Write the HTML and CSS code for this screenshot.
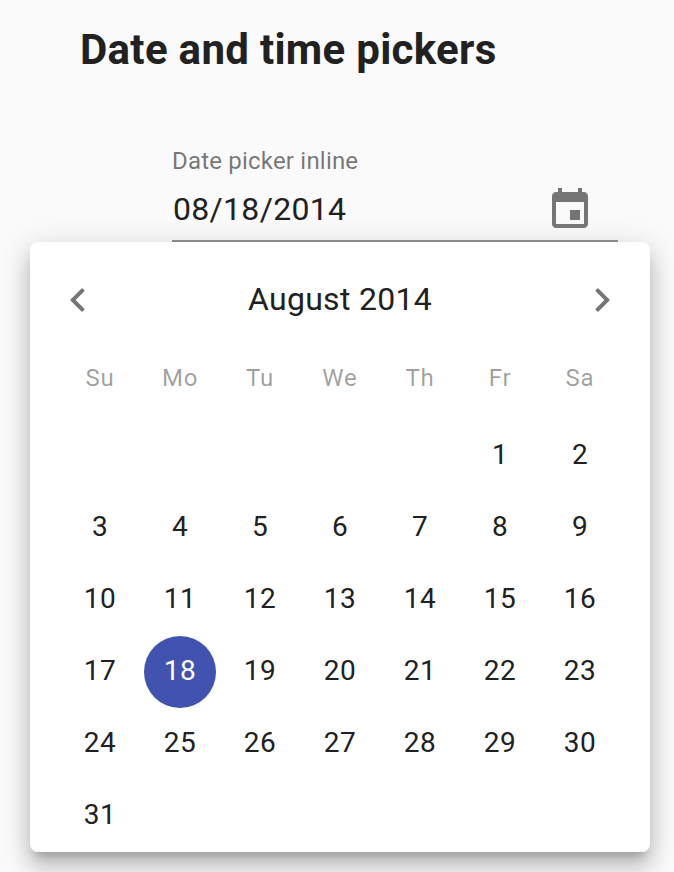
FILE: index.html
```html
<!DOCTYPE html>
<html lang="en">
<head>
<meta charset="utf-8">
<title>Date and time pickers</title>
<link rel="stylesheet" href="styles.css">
</head>
<body>
<h1 class="title">Date and time pickers</h1>
<div class="field">
  <div class="field-label">Date picker inline</div>
  <div class="field-row">
    <span class="field-value">08/18/2014</span>
    <svg class="field-icon" viewBox="0 0 24 24"><path d="M17 12h-5v5h5v-5zM16 1v2H8V1H6v2H5c-1.11 0-1.99.9-1.99 2L3 19c0 1.1.89 2 2 2h14c1.1 0 2-.9 2-2V5c0-1.1-.9-2-2-2h-1V1h-2zm3 18H5V8h14v11z"/></svg>
  </div>
</div>
<div class="picker">
  <div class="picker-header">
    <svg class="arrow" viewBox="0 0 24 24"><path d="M15.41 7.41L14 6l-6 6 6 6 1.41-1.41L10.83 12z"/></svg>
    <span class="month">August 2014</span>
    <svg class="arrow" viewBox="0 0 24 24"><path d="M10 6L8.59 7.41 13.17 12l-4.58 4.59L10 18l6-6z"/></svg>
  </div>
  <div class="weekdays">
    <span>Su</span><span>Mo</span><span>Tu</span><span>We</span><span>Th</span><span>Fr</span><span>Sa</span>
  </div>
  <div class="days">
    <span class="day first">1</span><span class="day">2</span>
    <span class="day">3</span><span class="day">4</span><span class="day">5</span><span class="day">6</span><span class="day">7</span><span class="day">8</span><span class="day">9</span>
    <span class="day">10</span><span class="day">11</span><span class="day">12</span><span class="day">13</span><span class="day">14</span><span class="day">15</span><span class="day">16</span>
    <span class="day">17</span><span class="day selected">18</span><span class="day">19</span><span class="day">20</span><span class="day">21</span><span class="day">22</span><span class="day">23</span>
    <span class="day">24</span><span class="day">25</span><span class="day">26</span><span class="day">27</span><span class="day">28</span><span class="day">29</span><span class="day">30</span>
    <span class="day">31</span>
  </div>
</div>
</body>
</html>
```

FILE: styles.css
```css
* { box-sizing: border-box; }
body {
  margin: 0;
  height: 872px;
  overflow: hidden;
  background: #fafafa;
  color: #212121;
  font-family: Roboto, "Liberation Sans", sans-serif;
}
.title {
  margin: 0;
  padding: 25px 0 0 80px;
  height: 146px;
  font-size: 42px;
  line-height: 50px;
  font-weight: 700;
  letter-spacing: 0.3px;
  white-space: nowrap;
}
.field {
  width: 446px;
  height: 96px;
  margin-left: 172px;
  border-bottom: 2px solid #949494;
}
.field-label {
  display: block;
  height: 30px;
  font-size: 24px;
  line-height: 30px;
  letter-spacing: 0.2px;
  color: rgba(0, 0, 0, 0.54);
}
.field-row {
  display: flex;
  justify-content: space-between;
  padding: 0 24px 0 1px;
}
.field-value {
  padding-top: 14px;
  font-size: 32px;
  line-height: 38px;
  letter-spacing: 0.3px;
}
.field-icon {
  width: 48px;
  height: 48px;
  margin-top: 10px;
  fill: #757575;
}
.picker {
  width: 620px;
  height: 610px;
  margin-left: 30px;
  border-radius: 8px;
  background: #fff;
  box-shadow: 0 10px 10px -6px rgba(0, 0, 0, 0.2), 0 16px 20px 2px rgba(0, 0, 0, 0.14), 0 6px 28px 4px rgba(0, 0, 0, 0.12);
}
.picker-header {
  display: flex;
  justify-content: space-between;
  align-items: center;
  height: 116px;
  padding: 0 24px;
}
.arrow {
  width: 48px;
  height: 48px;
  fill: #757575;
}
.month {
  padding-bottom: 2px;
  font-size: 32px;
  line-height: 40px;
  letter-spacing: 0.3px;
}
.weekdays, .days {
  display: grid;
  grid-template-columns: repeat(7, 80px);
  padding-left: 30px;
  text-align: center;
}
.weekdays {
  height: 62px;
  font-size: 24px;
  line-height: 40px;
  letter-spacing: 0.8px;
  color: rgba(0, 0, 0, 0.38);
}
.days {
  grid-auto-rows: 72px;
  justify-items: center;
}
.day {
  width: 72px;
  height: 72px;
  border-radius: 50%;
  font-size: 28px;
  line-height: 70px;
  letter-spacing: 0.4px;
}
.first { grid-column: 6; }
.selected {
  background: #4153af;
  color: #fff;
}
```
